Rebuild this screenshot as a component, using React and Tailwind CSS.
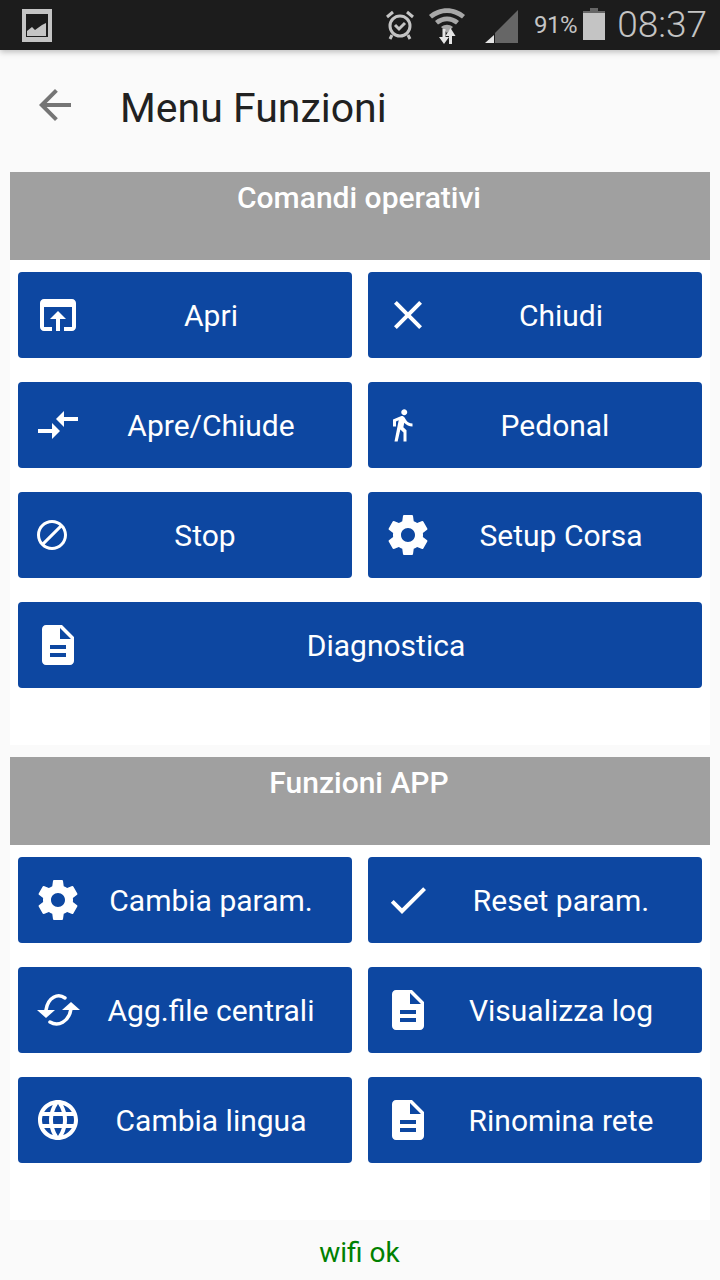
const ROBOTO = "font-['Roboto',sans-serif]";

const ICONS = {
    open: "M19 4H5c-1.11 0-2 .9-2 2v12c0 1.1.89 2 2 2h4v-2H5V8h14v10h-4v2h4c1.1 0 2-.9 2-2V6c0-1.1-.89-2-2-2zm-7 6l-4 4h3v6h2v-6h3l-4-4z",
    close: "M19 6.41L17.59 5 12 10.59 6.41 5 5 6.41 10.59 12 5 17.59 6.41 19 12 13.41 17.59 19 19 17.59 13.41 12z",
    compare: "M9.01 14H2v2h7.01v3L13 15l-3.99-4v3zm5.98-1v-3H22V8h-7.01V5L11 9l3.99 4z",
    walk: "M13.5 5.5c1.1 0 2-.9 2-2s-.9-2-2-2-2 .9-2 2 .9 2 2 2zM9.8 8.9L7 23h2.1l1.8-8 2.1 2v6h2v-7.5l-2.1-2 .6-3C14.8 12 16.8 13 19 13v-2c-1.9 0-3.5-1-4.3-2.4l-1-1.6c-.4-.6-1-1-1.7-1-.3 0-.5.1-.8.1L6 8.3V13h2V9.6l1.8-.7",
    stop: "M12 2C6.48 2 2 6.48 2 12s4.48 10 10 10 10-4.48 10-10S17.52 2 12 2zM4 12c0-4.42 3.58-8 8-8 1.85 0 3.55.63 4.9 1.69L5.69 16.9C4.63 15.55 4 13.85 4 12zm8 8c-1.85 0-3.55-.63-4.9-1.69L18.31 7.1C19.37 8.45 20 10.15 20 12c0 4.42-3.58 8-8 8z",
    gear: "M19.43 12.98c.04-.32.07-.64.07-.98s-.03-.66-.07-.98l2.11-1.65c.19-.15.24-.42.12-.64l-2-3.46c-.12-.22-.39-.3-.61-.22l-2.49 1c-.52-.4-1.08-.73-1.69-.98l-.38-2.65C14.46 2.18 14.25 2 14 2h-4c-.25 0-.46.18-.49.42l-.38 2.65c-.61.25-1.17.59-1.69.98l-2.49-1c-.23-.09-.49 0-.61.22l-2 3.46c-.13.22-.07.49.12.64l2.11 1.65c-.04.32-.07.65-.07.98s.03.66.07.98l-2.11 1.65c-.19.15-.24.42-.12.64l2 3.46c.12.22.39.3.61.22l2.49-1c.52.4 1.08.73 1.69.98l.38 2.65c.03.24.24.42.49.42h4c.25 0 .46-.18.49-.42l.38-2.65c.61-.25 1.17-.59 1.69-.98l2.49 1c.23.09.49 0 .61-.22l2-3.46c.12-.22.07-.49-.12-.64l-2.11-1.65zM12 15.5c-1.93 0-3.5-1.57-3.5-3.5s1.57-3.5 3.5-3.5 3.5 1.57 3.5 3.5-1.57 3.5-3.5 3.5z",
    doc: "M14 2H6c-1.1 0-1.99.9-1.99 2L4 20c0 1.1.89 2 1.99 2H18c1.1 0 2-.9 2-2V8l-6-6zm2 16H8v-2h8v2zm0-4H8v-2h8v2zm-3-5V3.5L18.5 9H13z",
    check: "M9 16.17L4.83 12l-1.42 1.41L9 19 21 7l-1.41-1.41z",
    globe: "M11.99 2C6.47 2 2 6.48 2 12s4.47 10 9.99 10C17.52 22 22 17.52 22 12S17.52 2 11.99 2zm6.93 6h-2.95c-.32-1.25-.78-2.45-1.38-3.56 1.84.63 3.37 1.91 4.33 3.56zM12 4.04c.83 1.2 1.48 2.53 1.91 3.96h-3.82c.43-1.43 1.08-2.76 1.91-3.96zM4.26 14C4.1 13.36 4 12.69 4 12s.1-1.36.26-2h3.38c-.08.66-.14 1.32-.14 2 0 .68.06 1.34.14 2H4.26zm.82 2h2.95c.32 1.25.78 2.45 1.38 3.56-1.84-.63-3.37-1.9-4.33-3.56zm2.95-8H5.08c.96-1.66 2.49-2.93 4.33-3.56C8.81 5.55 8.35 6.75 8.03 8zM12 19.96c-.83-1.2-1.48-2.53-1.91-3.96h3.82c-.43 1.43-1.08 2.76-1.91 3.96zM14.34 14H9.66c-.09-.66-.16-1.32-.16-2 0-.68.07-1.35.16-2h4.68c.09.65.16 1.32.16 2 0 .68-.07 1.34-.16 2zm.25 5.56c.6-1.11 1.06-2.31 1.38-3.56h2.95c-.96 1.65-2.49 2.93-4.33 3.56zM16.36 14c.08-.66.14-1.32.14-2 0-.68-.06-1.34-.14-2h3.38c.16.64.26 1.31.26 2s-.1 1.36-.26 2h-3.38z",
};

function Icon({ name, small }) {
    return (
        <svg viewBox="0 0 24 24" fill="white" className={small ? "w-9 h-9 shrink-0" : "w-12 h-12 shrink-0"}>
            <path d={ICONS[name]} />
        </svg>
    );
}

// le due frecce di "Agg.file centrali" non sono un'icona material standard
function SyncIcon() {
    return (
        <svg viewBox="0 0 48 48" className="w-12 h-12 shrink-0">
            <path d="M31 12C24 7 14 11 12 24" fill="none" stroke="white" strokeWidth="3.5" strokeLinecap="round" />
            <path d="M16 36C24 41 35 36 37 23" fill="none" stroke="white" strokeWidth="3.5" strokeLinecap="round" />
            <path d="M3 24h18l-9 8z" fill="white" />
            <path d="M28 24h18l-9-8z" fill="white" />
        </svg>
    );
}

function MenuButton({ icon, small, label, full }) {
    return (
        <div className={`h-[86px] bg-[#0d47a1] rounded-[4px] flex items-center pl-4 pr-3 text-white text-[30px] ${full ? "col-span-2" : ""}`}>
            {icon === "sync" ? <SyncIcon /> : <Icon name={icon} small={small} />}
            <span className="flex-1 text-center whitespace-nowrap">{label}</span>
        </div>
    );
}

function Section({ title, items, className }) {
    return (
        <section className={`bg-white ${className}`}>
            <h2 className="h-[88px] bg-[#a0a0a0] text-white text-center font-medium text-[30px] leading-[52px] pr-[2px]">{title}</h2>
            <div className="grid grid-cols-2 gap-x-4 gap-y-6 px-2 pt-3">
                {items.map(item => <MenuButton key={item.label} {...item} />)}
            </div>
        </section>
    );
}

function StatusBar() {
    return (
        <div className="h-[50px] bg-[#1c1c1c] flex items-center pl-[22px] pr-[13px] text-[#c4c4c4] shadow-[0_2px_6px_rgba(0,0,0,0.25)] relative">
            <svg viewBox="0 0 30 33" className="w-[30px] h-[33px]">
                <path d="M0 0h30v33H0z" fill="#c4c4c4" />
                <path d="M4 5h22v23H4z" fill="#1c1c1c" />
                <path d="M5 27v-5l5-4 3 3 7-5 4-2v13z" fill="#c4c4c4" />
            </svg>
            <div className="flex-1" />
            <svg viewBox="0 0 28 30" fill="none" stroke="#c4c4c4" className="w-[28px] h-[30px]">
                <circle cx="14" cy="16" r="10" strokeWidth="3" />
                <path d="M9 15l4 4 6-6" strokeWidth="3" />
                <path d="M1 7l6-5M27 7l-6-5M6 25l-2 4M22 25l2 4" strokeWidth="3" />
            </svg>
            <svg viewBox="0 0 38 36" className="w-[38px] h-[36px] ml-[14px] mt-[2px]">
                <path d="M1 7C11 -2 27 -2 37 7l-3 3.500C25 3 13 3 4 10.500z" fill="#a8a8a8" />
                <path d="M7 13C14 7 24 7 31 13l-3 3.500C22 12 16 12 10 16.500z" fill="#a8a8a8" />
                <path d="M13 19c4-3 8-3 12 0l-6 6z" fill="#a8a8a8" />
                <path d="M14.500 21h3v8h3.500l-5 7-5-7h3.500z" fill="#e4e4e4" />
                <path d="M24 36h-3v-8h-3.500l5-8 5 8H24z" fill="#e4e4e4" />
            </svg>
            <svg viewBox="0 0 33 33" className="w-[33px] h-[33px] ml-[19px] mt-[3px]">
                <path d="M33 0v33H10v-10z" fill="#666666" />
                <path d="M9 25v8H0z" fill="#e4e4e4" />
            </svg>
            <span className={`${ROBOTO} text-[24px] ml-[16px] tracking-[-0.5px]`}>91%</span>
            <svg viewBox="0 0 22 32" className="w-[22px] h-[32px] ml-[6px] -mt-[2px]">
                <path d="M7 0h8v3h7v29H0V3h7z" fill="#c4c4c4" />
                <path d="M7 0h8v3H7zM0 3h22v2H0z" fill="#666666" />
            </svg>
            <span className={`${ROBOTO} text-[37px] ml-[12px] font-light`}>08:37</span>
        </div>
    );
}

export default function App() {
    return (
        <div className={`${ROBOTO} w-[720px] h-[1280px] bg-[#fafafa] overflow-hidden`}>
            <StatusBar />

            <header className="h-[122px] flex items-center pl-[31px]">
                <svg viewBox="0 0 24 24" fill="#757575" className="w-12 h-12 shrink-0 -mt-[12px]">
                    <path d="M20 11H7.830l5.590-5.590L12 4l-8 8 8 8 1.410-1.410L7.830 13H20v-2z" />
                </svg>
                <h1 className="ml-[41px] -mt-[4px] text-[41px] text-[#212121]">Menu Funzioni</h1>
            </header>

            <div className="px-[10px]">
                <Section
                    title="Comandi operativi"
                    className="h-[573px]"
                    items={[
                        { icon: "open", label: "Apri" },
                        { icon: "close", label: "Chiudi" },
                        { icon: "compare", label: "Apre/Chiude" },
                        { icon: "walk", small: true, label: "Pedonal" },
                        { icon: "stop", small: true, label: "Stop" },
                        { icon: "gear", label: "Setup Corsa" },
                        { icon: "doc", label: "Diagnostica", full: true },
                    ]}
                />
                <Section
                    title="Funzioni APP"
                    className="h-[463px] mt-3"
                    items={[
                        { icon: "gear", label: "Cambia param." },
                        { icon: "check", label: "Reset param." },
                        { icon: "sync", label: "Agg.file centrali" },
                        { icon: "doc", label: "Visualizza log" },
                        { icon: "globe", label: "Cambia lingua" },
                        { icon: "doc", label: "Rinomina rete" },
                    ]}
                />
            </div>

            <p className="text-center text-[#008000] text-[28px] mt-[17px] leading-[32px] pr-[1px]">wifi ok</p>
        </div>
    );
}
